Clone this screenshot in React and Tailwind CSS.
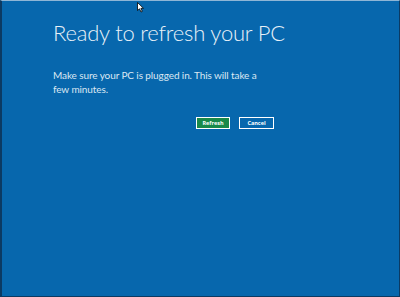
export default function App() {
  return (
    <div className="relative h-[297px] w-[400px] overflow-hidden bg-[#0767ad] border-t border-t-[#8fb6d6] border-l-2 border-l-[#0b3a63] border-r border-r-[#0b3a63] border-b border-b-[#0b3a63] font-['Lato',sans-serif] text-white">
      {/* mouse cursor */}
      <svg className="absolute left-[135px] top-[1px]" width="7" height="11" viewBox="0 0 7 11">
        <path d="M0.5 0.5 L0.5 8.5 L2.5 6.8 L4 10 L5.3 9.4 L3.9 6.3 L6.5 6.3 Z" fill="#fff" stroke="#000" strokeWidth="0.8" />
      </svg>

      <div className="pl-[51px] pt-[17px]">
        <h1 className="text-[22px] font-light leading-[30px] tracking-[-0.2px] text-[#e8f1f8]">Ready to refresh your PC</h1>
        <p className="mt-[20px] w-[212px] text-[10px] leading-[14px] tracking-[-0.1px] text-[#dbe8f3]">
          Make sure your PC is plugged in. This will take a few minutes.
        </p>
        <div className="mt-[21px] ml-[143px] flex gap-[9px]">
          <button className="h-[12px] w-[34px] border border-white bg-[#19894a] font-['Open_Sans',sans-serif] text-[5.5px] font-bold leading-[10px] text-white">Refresh</button>
          <button className="h-[12px] w-[35px] border border-white bg-[#0767ad] font-['Open_Sans',sans-serif] text-[5.5px] font-bold leading-[10px] text-white">Cancel</button>
        </div>
      </div>
    </div>
  );
}
